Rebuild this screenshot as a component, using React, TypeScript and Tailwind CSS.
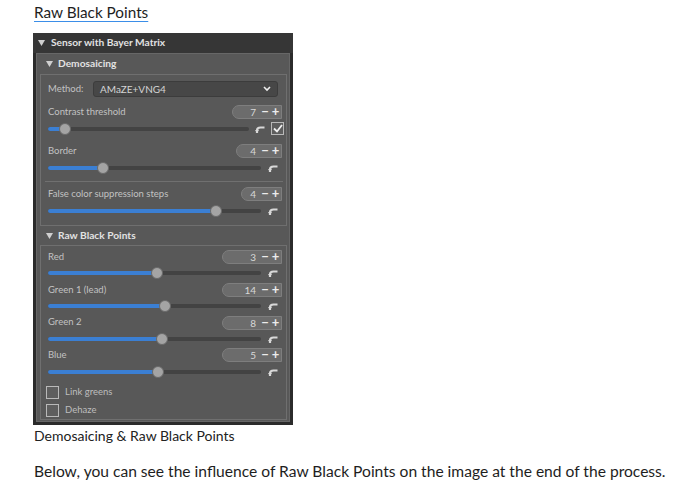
import React from "react";

const Tri = () => (
  <svg width="7" height="6" viewBox="0 0 7 6" className="shrink-0">
    <path d="M0 0 L7 0 L3.5 6 Z" fill="#cfcfcf" />
  </svg>
);

const Reset = () => (
  <svg width="10" height="8" viewBox="0 0 10 8" className="shrink-0">
    <path d="M2 8 V5.5 Q2 2.5 5.5 2.5 H9.5" stroke="#d8d8d8" strokeWidth="2.2" fill="none" />
    <path d="M0 5 L2 8 L4 5 Z" fill="#d8d8d8" />
  </svg>
);

function Spinner({ value, w }: { value: string; w: string }) {
  return (
    <div className={`${w} h-[14px] flex items-center rounded-l-full bg-[#6c6c6c] border border-[#7e7e7e] text-[10px] leading-none`}>
      <span className="flex-1 text-right text-[#d8d8d8] pr-[4px]">{value}</span>
      <span className="text-[#ececec] font-bold text-[13px] w-[10px] text-center leading-none -mt-[1px]">−</span>
      <span className="text-[#ececec] font-bold text-[13px] w-[11px] text-center leading-none -mt-[1px]">+</span>
    </div>
  );
}

function Slider({ pct, children }: { pct: number; children?: React.ReactNode }) {
  return (
    <div className="h-[17px] flex items-center">
      <div className="flex-1 relative h-[4px] bg-[#434343] rounded-full">
        <div className="absolute left-0 top-0 h-[4px] bg-[#3b7fd3] rounded-full" style={{ width: `${pct}%` }} />
        <div
          className="absolute top-1/2 w-[12px] h-[12px] -mt-[6px] -ml-[6px] rounded-full bg-[#a4a4a4] border border-[#6a6a6a]"
          style={{ left: `${pct}%` }}
        />
      </div>
      {children ?? (
        <div className="w-[21px] flex justify-end pr-[4px]">
          <Reset />
        </div>
      )}
    </div>
  );
}

function LabelRow({ label, value, w }: { label: string; value: string; w: string }) {
  return (
    <div className="h-[16px] flex items-center justify-between">
      <span className="text-[#c2c2c2] text-[9.5px]">{label}</span>
      <Spinner value={value} w={w} />
    </div>
  );
}

function Check({ checked }: { checked?: boolean }) {
  return (
    <div className="w-[13px] h-[13px] border border-[#b9b9b9] bg-[#5e5e5e] flex items-center justify-center shrink-0">
      {checked && (
        <svg width="10" height="9" viewBox="0 0 10 9">
          <path d="M1 4.5 L4 7.5 L9 1" stroke="#f0f0f0" strokeWidth="1.8" fill="none" />
        </svg>
      )}
    </div>
  );
}

export default function App() {
  return (
    <div className="bg-white w-[690px] h-[488px] pl-[34px] text-[#1e1e1e]" style={{ fontFamily: 'Lato, "Noto Sans", sans-serif' }}>
      <div className="pt-[0px] h-[33px]">
        <span className="text-[15.3px] leading-[20px] underline decoration-[#3b8ee8] underline-offset-[3px]">Raw Black Points</span>
      </div>

      <div
        className="w-[260px] h-[392px] -ml-[1px] bg-[#2b2b2b] flex flex-col px-[3px] pb-[3px]"
        style={{ fontFamily: 'Lato, "Liberation Sans", sans-serif' }}
      >
        <div className="h-[20px] shrink-0 flex items-center gap-[6px] pl-[5px] bg-[#363636] -mx-[3px]">
          <Tri />
          <span className="text-[#e2e2e2] text-[10.2px] font-bold">Sensor with Bayer Matrix</span>
        </div>

        <div className="flex-1 bg-[#585858] border border-[#676767] flex flex-col pl-[3px] pr-[2px]">
          <div className="h-[20px] flex items-center gap-[5px] pl-[6px]">
            <Tri />
            <span className="text-[#e2e2e2] text-[10.2px] font-bold">Demosaicing</span>
          </div>
          <div className="h-[152px] border border-[#6f6f6f] flex flex-col pl-[7px] pr-[4px] pt-[6px]">
            <div className="h-[16px] flex items-center">
              <span className="text-[#c2c2c2] text-[9.5px] w-[45px]">Method:</span>
              <div className="w-[185px] h-[16px] rounded-[3px] bg-[#474747] border border-[#3c3c3c] flex items-center px-[6px]">
                <span className="flex-1 text-[#d4d4d4] text-[10px]">AMaZE+VNG4</span>
                <svg width="8" height="6" viewBox="0 0 8 6">
                  <path d="M1 1 L4 4 L7 1" stroke="#eeeeee" strokeWidth="1.6" fill="none" />
                </svg>
              </div>
            </div>
            <div className="h-[7px]" />
            <LabelRow label="Contrast threshold" value="7" w="w-[50px]" />
            <Slider pct={8.5}>
              <div className="w-[35px] flex items-center justify-end gap-[6px] -mr-[2px]">
                <Reset />
                <Check checked />
              </div>
            </Slider>
            <div className="h-[6px]" />
            <LabelRow label="Border" value="4" w="w-[46px]" />
            <Slider pct={26} />
            <div className="h-[6px] flex items-end -mr-[1px] -ml-[3px]">
              <div className="h-[1px] w-full bg-[#707070]" />
            </div>
            <div className="h-[4px]" />
            <LabelRow label="False color suppression steps" value="4" w="w-[41px]" />
            <Slider pct={79} />
          </div>

          <div className="h-[18px] flex items-center gap-[5px] pl-[6px] mt-[1px]">
            <Tri />
            <span className="text-[#e2e2e2] text-[10.2px] font-bold">Raw Black Points</span>
          </div>
          <div className="h-[175px] border border-[#6f6f6f] flex flex-col pl-[7px] pr-[4px] pt-[3px]">
            <LabelRow label="Red" value="3" w="w-[60px]" />
            <Slider pct={51} />
            <LabelRow label="Green 1 (lead)" value="14" w="w-[60px]" />
            <Slider pct={55} />
            <LabelRow label="Green 2" value="8" w="w-[60px]" />
            <Slider pct={53.5} />
            <LabelRow label="Blue" value="5" w="w-[60px]" />
            <Slider pct={51.6} />
            <div className="h-[3px]" />
            <div className="h-[18px] flex items-center gap-[6px] -ml-[2px]">
              <Check />
              <span className="text-[#bdbdbd] text-[9.5px]">Link greens</span>
            </div>
            <div className="h-[18px] flex items-center gap-[6px] -ml-[2px]">
              <Check />
              <span className="text-[#bdbdbd] text-[9.5px]">Dehaze</span>
            </div>
          </div>
        </div>
      </div>

      <div className="text-[14px] leading-[18px] mt-[2px] text-[#222]">Demosaicing &amp; Raw Black Points</div>
      <div className="text-[15.6px] leading-[20px] mt-[16px] text-[#1e1e1e]">
        Below, you can see the influence of Raw Black Points on the image at the end of the process.
      </div>
    </div>
  );
}
